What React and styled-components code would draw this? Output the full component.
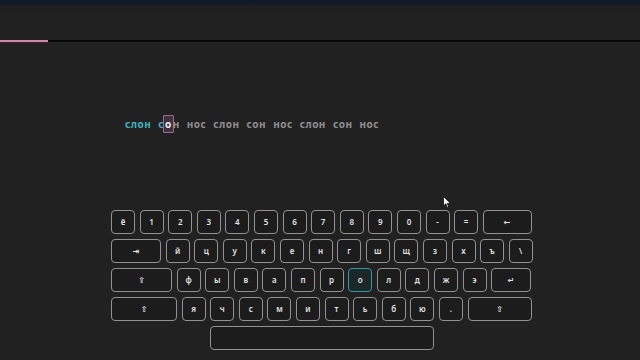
import React from "react";
import styled, { createGlobalStyle } from "styled-components";

const Global = createGlobalStyle`
  html, body { margin: 0; padding: 0; background: #212121; }
  #root { width: 640px; height: 360px; }
`;

const Page = styled.div`
  position: relative;
  width: 640px;
  height: 360px;
  overflow: hidden;
  background: #212121;
  display: flex;
  flex-direction: column;
  font-family: "Noto Sans", "DejaVu Sans", sans-serif;
`;

const Header = styled.div`
  height: 40px;
  background: linear-gradient(180deg, #0e192b 0px, #141a24 3px, #1f1f20 7px, #212121 12px);
`;

const Track = styled.div`
  position: relative;
  height: 2px;
  background: #080808;
  border-bottom: 1px solid #262626;
`;

const Fill = styled.div`
  height: 2px;
  background: #c98aa8;
  box-shadow: 0 1px 0 #4a1c32;
`;

const Words = styled.div`
  margin-top: 71px;
  height: 20px;
  padding-left: 125px;
  display: flex;
  align-items: center;
  gap: 7px;
  font-size: 10px;
  font-weight: 700;
  letter-spacing: 0.5px;
`;

const Word = styled.span`
  display: inline-flex;
  align-items: center;
`;

const Letter = styled.span`
  color: ${(p) => (p.$done ? "#3fb2bf" : "#8f8f8f")};
`;

const Caret = styled.span`
  display: inline-flex;
  align-items: center;
  justify-content: center;
  height: 18px;
  margin: 0 -1px;
  padding: 0 1px;
  box-sizing: border-box;
  border: 1.5px solid #9c6a8c;
  border-radius: 1px;
  background: rgba(120, 80, 110, 0.35);
  color: #f2f2f2;
`;

const Keyboard = styled.div`
  margin-top: 76px;
  margin-left: 111px;
  width: 421px;
  display: flex;
  flex-direction: column;
  gap: 5px;
`;

const Row = styled.div`
  display: flex;
  gap: 4.6px;
  justify-content: ${(p) => (p.$center ? "center" : "flex-start")};
`;

const Key = styled.div`
  flex: none;
  width: ${(p) => p.$w || 24}px;
  height: 24px;
  box-sizing: border-box;
  border: 1px solid ${(p) => (p.$active ? "#2e9a9c" : "#929292")};
  border-radius: 4px;
  background: ${(p) => (p.$active ? "#1c2727" : "#1c1c1c")};
  display: flex;
  align-items: center;
  justify-content: center;
  color: #e2e2e2;
  font-size: 8px;
  font-weight: 600;
  line-height: 1;
`;

const Pointer = styled.svg`
  position: absolute;
  left: 443px;
  top: 196px;
`;

const rows = [
  [["ё"], ["1"], ["2"], ["3"], ["4"], ["5"], ["6"], ["7"], ["8"], ["9"], ["0"], ["-"], ["="], ["←", 49]],
  [["⇥", 50], ["й"], ["ц"], ["у"], ["к"], ["е"], ["н"], ["г"], ["ш"], ["щ"], ["з"], ["х"], ["ъ"], ["\\"]],
  [["⇪", 61], ["ф"], ["ы"], ["в"], ["а"], ["п"], ["р"], ["о", 24, true], ["л"], ["д"], ["ж"], ["э"], ["↵", 40]],
  [["⇧", 66], ["я"], ["ч"], ["с"], ["м"], ["и"], ["т"], ["ь"], ["б"], ["ю"], ["."], ["⇧", 64]],
];

const words = ["слон", "сон", "нос", "слон", "сон", "нос", "слон", "сон", "нос"];

export default function App() {
  return (
    <Page>
      <Global />
      <Header />
      <Track>
        <Fill style={{ width: 48 }} />
      </Track>
      <Words>
        {words.map((w, wi) => (
          <Word key={wi}>
            {w.split("").map((ch, ci) => {
              if (wi === 1 && ci === 1) return <Caret key={ci}>{ch}</Caret>;
              const done = wi === 0 || (wi === 1 && ci === 0);
              return (
                <Letter key={ci} $done={done}>
                  {ch}
                </Letter>
              );
            })}
          </Word>
        ))}
      </Words>
      <Keyboard>
        {rows.map((r, ri) => (
          <Row key={ri}>
            {r.map(([label, w, active], ki) => (
              <Key key={ki} $w={w} $active={active}>
                {label}
              </Key>
            ))}
          </Row>
        ))}
        <Row $center>
          <Key $w={224} />
        </Row>
      </Keyboard>
      <Pointer width="9" height="13" viewBox="0 0 9 13">
        <path d="M0.5 0.5 L0.5 10 L2.8 7.8 L4.4 11.6 L5.8 11 L4.3 7.4 L7.6 7.4 Z" fill="#f4f4f4" stroke="#111" strokeWidth="0.8" strokeLinejoin="round" />
      </Pointer>
    </Page>
  );
}
